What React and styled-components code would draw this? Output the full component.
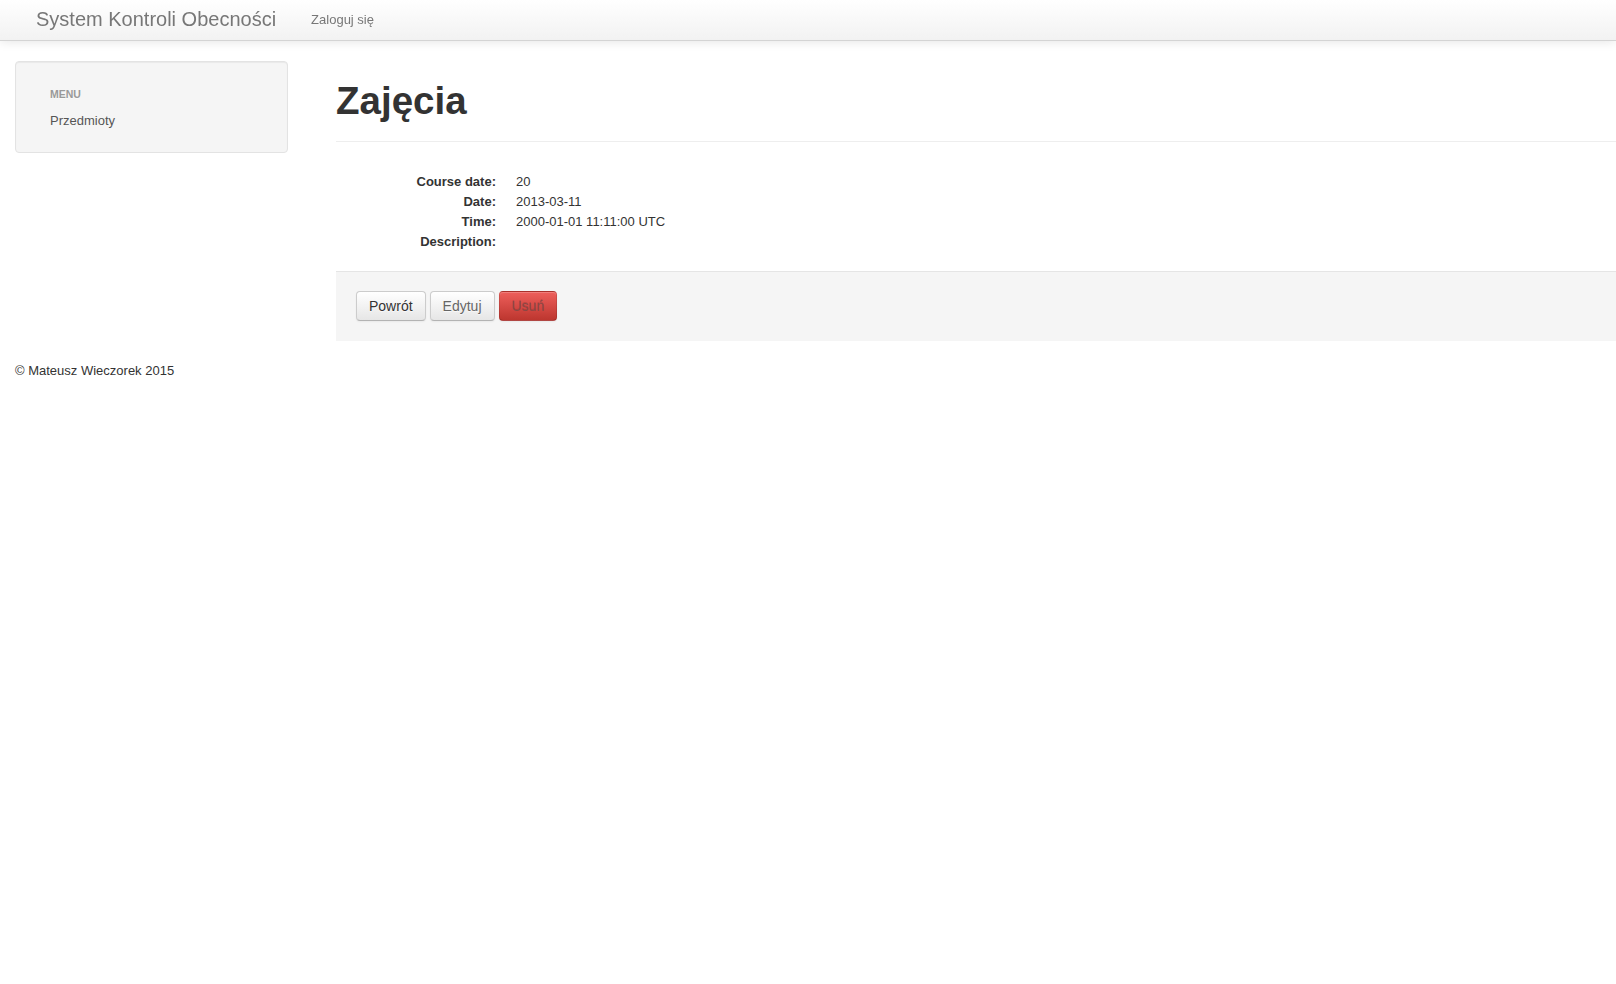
import React from "react";
import styled, { createGlobalStyle } from "styled-components";

const Global = createGlobalStyle`
  html, body { margin: 0; padding: 0; background: #fff; }
  body {
    font-family: "Liberation Sans", Arial, Helvetica, sans-serif;
    font-size: 13px;
    line-height: 20px;
    color: #333;
    overflow-x: hidden;
  }
`;

const Navbar = styled.div`
  position: fixed;
  top: 0;
  left: 0;
  right: 0;
  height: 40px;
  background: linear-gradient(to bottom, #ffffff, #f2f2f2);
  border-bottom: 1px solid #d4d4d4;
  box-shadow: 0 1px 10px rgba(0, 0, 0, 0.1);
  display: flex;
  align-items: center;
  padding-left: 16px;
  z-index: 10;
`;

const Brand = styled.a`
  font-size: 20px;
  line-height: 20px;
  color: #777;
  padding: 10px 20px 10px 20px;
  text-decoration: none;
  font-weight: 200;
  margin-top: -2px;
`;

const NavLink = styled.a`
  font-size: 13px;
  line-height: 20px;
  color: #777;
  padding: 10px 15px;
  text-decoration: none;
`;

const Page = styled.div`
  padding-top: 61px;
  padding-left: 15px;
`;

const Row = styled.div`
  display: flex;
  align-items: flex-start;
  gap: 48px;
  width: 1601px;
`;

const Well = styled.div`
  flex: 0 0 273px;
  box-sizing: border-box;
  background: #f5f5f5;
  border: 1px solid #e3e3e3;
  border-radius: 4px;
  box-shadow: inset 0 1px 1px rgba(0, 0, 0, 0.05);
  padding: 19px;
`;

const NavList = styled.ul`
  list-style: none;
  margin: 0;
  padding: 0 15px;
`;

const NavHeader = styled.li`
  font-size: 10.5px;
  font-weight: bold;
  line-height: 20px;
  color: #999;
  text-transform: uppercase;
  padding: 3px 0 3px;
  text-shadow: 0 1px 0 rgba(255, 255, 255, 0.5);
`;

const NavItem = styled.li`
  a {
    display: block;
    padding: 4px 0 2px;
    color: #555;
    text-decoration: none;
    line-height: 20px;
    font-size: 13px;
  }
`;

const Main = styled.div`
  flex: 1;
  min-width: 0;
`;

const PageHeader = styled.div`
  margin: 0 0 30px;
  padding-bottom: 10px;
  border-bottom: 1px solid #eee;
`;

const Title = styled.h1`
  margin: 20px 0 10px;
  font-size: 38.5px;
  line-height: 40px;
  font-weight: bold;
  color: #333;
`;

const Dl = styled.dl`
  display: grid;
  grid-template-columns: 160px 1fr;
  column-gap: 20px;
  margin: 0 0 19px;
`;

const Dt = styled.dt`
  font-weight: bold;
  text-align: right;
  line-height: 20px;
  min-height: 20px;
`;

const Dd = styled.dd`
  margin: 0;
  line-height: 20px;
  min-height: 20px;
`;

const FormActions = styled.div`
  background: #f5f5f5;
  border-top: 1px solid #e5e5e5;
  padding: 19px 20px 20px;
  margin: 0 0 20px;
  display: flex;
  gap: 4px;
`;

const Button = styled.a`
  display: inline-block;
  padding: 4px 12px;
  font-size: 14px;
  line-height: 20px;
  border-radius: 4px;
  text-decoration: none;
  cursor: pointer;
  color: ${(p) => p.$color || "#333"};
  text-shadow: 0 1px 1px rgba(255, 255, 255, 0.75);
  background: ${(p) =>
    p.$danger
      ? "linear-gradient(to bottom, #ee5f5b, #bd362f)"
      : "linear-gradient(to bottom, #ffffff, #e6e6e6)"};
  border: 1px solid
    ${(p) => (p.$danger ? "rgba(0,0,0,0.1)" : "#cccccc")};
  border-bottom-color: ${(p) => (p.$danger ? "rgba(0,0,0,0.25)" : "#b3b3b3")};
  box-shadow: inset 0 1px 0 rgba(255, 255, 255, 0.2),
    0 1px 2px rgba(0, 0, 0, 0.05);
  ${(p) => p.$danger && "text-shadow: 0 -1px 0 rgba(0,0,0,0.15);"}
`;

const Footer = styled.footer`
  line-height: 20px;
  font-size: 13px;
  color: #333;
`;

export default function App() {
  return (
    <>
      <Global />
      <Navbar>
        <Brand href="#">System Kontroli Obecności</Brand>
        <NavLink href="#">Zaloguj się</NavLink>
      </Navbar>
      <Page>
        <Row>
          <Well>
            <NavList>
              <NavHeader>Menu</NavHeader>
              <NavItem>
                <a href="#">Przedmioty</a>
              </NavItem>
            </NavList>
          </Well>
          <Main>
            <PageHeader>
              <Title>Zajęcia</Title>
            </PageHeader>
            <Dl>
              <Dt>Course date:</Dt>
              <Dd>20</Dd>
              <Dt>Date:</Dt>
              <Dd>2013-03-11</Dd>
              <Dt>Time:</Dt>
              <Dd>2000-01-01 11:11:00 UTC</Dd>
              <Dt>Description:</Dt>
              <Dd></Dd>
            </Dl>
            <FormActions>
              <Button href="#">Powrót</Button>
              <Button href="#" $color="#666">Edytuj</Button>
              <Button href="#" $danger $color="#8a4744">Usuń</Button>
            </FormActions>
          </Main>
        </Row>
        <Footer>© Mateusz Wieczorek 2015</Footer>
      </Page>
    </>
  );
}
